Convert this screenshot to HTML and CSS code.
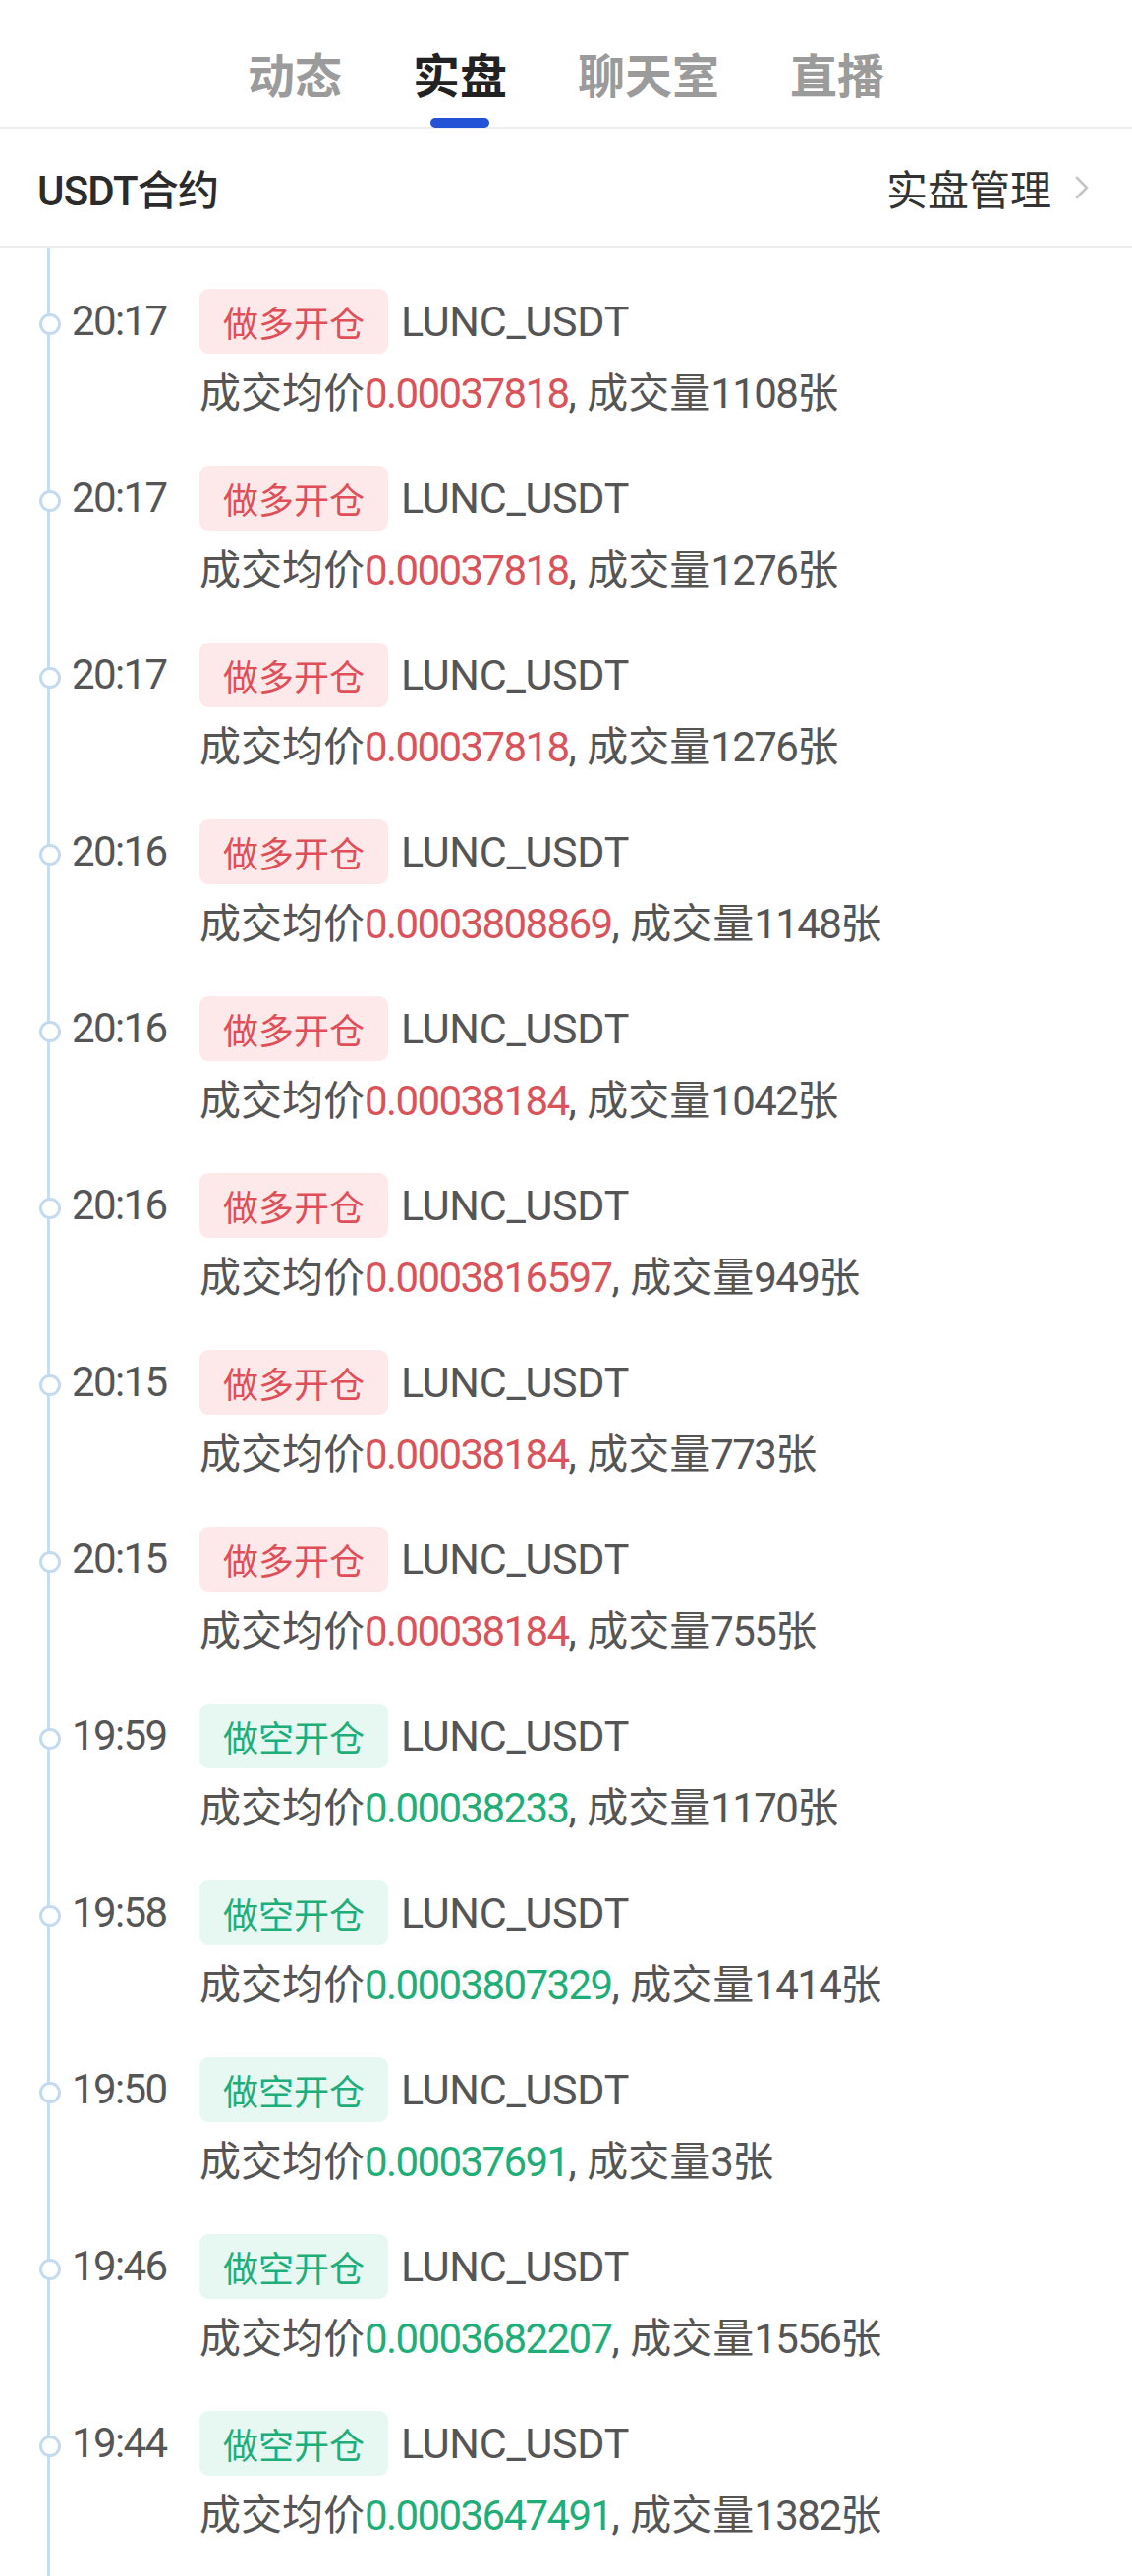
FILE: index.html
```html
<!DOCTYPE html>
<html lang="zh-CN">
<head>
<meta charset="utf-8">
<title>实盘</title>
<link rel="stylesheet" href="styles.css">
</head>
<body>
<div class="page">
  <nav class="tabs">
    <div class="tab">动态</div>
    <div class="tab active">实盘</div>
    <div class="tab">聊天室</div>
    <div class="tab">直播</div>
  </nav>
  <header class="head">
    <div class="head-title">USDT合约</div>
    <div class="head-link">实盘管理
      <svg class="chev" width="14" height="24" viewBox="0 0 14 24"><path d="M2 2 L12 12 L2 22" fill="none" stroke="#c4c4c4" stroke-width="2.6" stroke-linecap="round" stroke-linejoin="round"/></svg>
    </div>
  </header>
  <ul class="list">
    <li class="item"><span class="time">20:17</span><div class="top"><span class="badge long">做多开仓</span><span class="sym">LUNC_USDT</span></div><div class="detail">成交均价<span class="num up">0.00037818</span>, 成交量<span class="num">1108</span>张</div></li>
    <li class="item"><span class="time">20:17</span><div class="top"><span class="badge long">做多开仓</span><span class="sym">LUNC_USDT</span></div><div class="detail">成交均价<span class="num up">0.00037818</span>, 成交量<span class="num">1276</span>张</div></li>
    <li class="item"><span class="time">20:17</span><div class="top"><span class="badge long">做多开仓</span><span class="sym">LUNC_USDT</span></div><div class="detail">成交均价<span class="num up">0.00037818</span>, 成交量<span class="num">1276</span>张</div></li>
    <li class="item"><span class="time">20:16</span><div class="top"><span class="badge long">做多开仓</span><span class="sym">LUNC_USDT</span></div><div class="detail">成交均价<span class="num up">0.0003808869</span>, 成交量<span class="num">1148</span>张</div></li>
    <li class="item"><span class="time">20:16</span><div class="top"><span class="badge long">做多开仓</span><span class="sym">LUNC_USDT</span></div><div class="detail">成交均价<span class="num up">0.00038184</span>, 成交量<span class="num">1042</span>张</div></li>
    <li class="item"><span class="time">20:16</span><div class="top"><span class="badge long">做多开仓</span><span class="sym">LUNC_USDT</span></div><div class="detail">成交均价<span class="num up">0.0003816597</span>, 成交量<span class="num">949</span>张</div></li>
    <li class="item"><span class="time">20:15</span><div class="top"><span class="badge long">做多开仓</span><span class="sym">LUNC_USDT</span></div><div class="detail">成交均价<span class="num up">0.00038184</span>, 成交量<span class="num">773</span>张</div></li>
    <li class="item"><span class="time">20:15</span><div class="top"><span class="badge long">做多开仓</span><span class="sym">LUNC_USDT</span></div><div class="detail">成交均价<span class="num up">0.00038184</span>, 成交量<span class="num">755</span>张</div></li>
    <li class="item"><span class="time">19:59</span><div class="top"><span class="badge short">做空开仓</span><span class="sym">LUNC_USDT</span></div><div class="detail">成交均价<span class="num down">0.00038233</span>, 成交量<span class="num">1170</span>张</div></li>
    <li class="item"><span class="time">19:58</span><div class="top"><span class="badge short">做空开仓</span><span class="sym">LUNC_USDT</span></div><div class="detail">成交均价<span class="num down">0.0003807329</span>, 成交量<span class="num">1414</span>张</div></li>
    <li class="item"><span class="time">19:50</span><div class="top"><span class="badge short">做空开仓</span><span class="sym">LUNC_USDT</span></div><div class="detail">成交均价<span class="num down">0.00037691</span>, 成交量<span class="num">3</span>张</div></li>
    <li class="item"><span class="time">19:46</span><div class="top"><span class="badge short">做空开仓</span><span class="sym">LUNC_USDT</span></div><div class="detail">成交均价<span class="num down">0.0003682207</span>, 成交量<span class="num">1556</span>张</div></li>
    <li class="item"><span class="time">19:44</span><div class="top"><span class="badge short">做空开仓</span><span class="sym">LUNC_USDT</span></div><div class="detail">成交均价<span class="num down">0.0003647491</span>, 成交量<span class="num">1382</span>张</div></li>
  </ul>
</div>
</body>
</html>
```

FILE: styles.css
```css
* { box-sizing: border-box; }
html, body { margin: 0; padding: 0; background: #fff; }
body {
  font-family: Roboto, "Noto Sans CJK SC", sans-serif;
  color: #555;
  width: 1152px;
  overflow: hidden;
}
.page { width: 1152px; }

.tabs {
  height: 131px;
  display: flex;
  justify-content: center;
  gap: 72px;
  border-bottom: 2px solid #eeeeee;
  padding-top: 46px;
}
.tab {
  position: relative;
  font-family: "Noto Sans CJK SC", sans-serif;
  font-size: 48px;
  font-weight: 700;
  line-height: 56px;
  color: #9b9b9b;
  height: 56px;
}
.tab.active { color: #222; }
.tab.active::after {
  content: "";
  position: absolute;
  left: 50%;
  top: 74px;
  width: 60px;
  height: 10px;
  margin-left: -30px;
  border-radius: 5px;
  background: #2452d6;
}

.head {
  height: 121px;
  display: flex;
  align-items: center;
  justify-content: space-between;
  padding: 0 44px 0 38px;
  border-bottom: 2px solid #eeeeee;
}
.head-title {
  font-family: Roboto, "Noto Sans CJK SC", sans-serif;
  font-size: 42px;
  font-weight: 500;
  color: #2b2b2b;
  letter-spacing: -0.8px;
}
.head-link {
  display: flex;
  align-items: center;
  gap: 24px;
  font-family: "Noto Sans CJK SC", sans-serif;
  font-size: 42px;
  color: #333;
}
.chev { display: block; }

.list {
  list-style: none;
  margin: 0 0 0 48px;
  padding: 42px 0 0 0;
  border-left: 3px solid #c9ddf0;
  min-height: 2400px;
}
.item {
  position: relative;
  display: grid;
  grid-template-columns: 130px auto;
  grid-template-rows: 66px 56px;
  row-gap: 13px;
  padding: 0 0 45px 22px;
  align-items: center;
}
.item::before {
  content: "";
  position: absolute;
  left: -11px;
  top: 25px;
  width: 16px;
  height: 16px;
  border-radius: 50%;
  background: #fff;
  border: 3px solid #c3daf0;
}
.time {
  font-size: 42px;
  color: #555;
  letter-spacing: -1.6px;
  line-height: 66px;
}
.top {
  display: flex;
  align-items: center;
  gap: 13px;
}
.badge {
  display: inline-block;
  height: 66px;
  line-height: 66px;
  padding: 0 24px;
  border-radius: 9px;
  font-family: "Noto Sans CJK SC", sans-serif;
  font-size: 36px;
}
.badge.long { background: #fde9ea; color: #e04e57; }
.badge.short { background: #e7f8f3; color: #1fae78; }
.sym {
  font-size: 43px;
  color: #555;
  letter-spacing: -0.3px;
}
.detail {
  grid-column: 2;
  font-size: 42px;
  line-height: 56px;
  color: #555;
  white-space: nowrap;
}
.num { letter-spacing: -1.6px; }
.num.up { color: #d9545a; }
.num.down { color: #1fae78; }
```
